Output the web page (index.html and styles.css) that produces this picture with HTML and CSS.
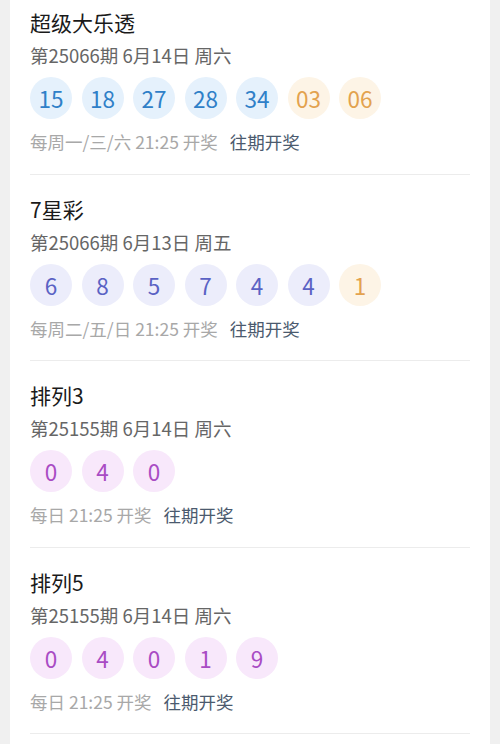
FILE: index.html
```html
<!DOCTYPE html>
<html lang="zh-CN">
<head>
    <meta charset="UTF-8">
    <meta name="viewport" content="width=device-width, initial-scale=1.0">
    <title>开奖结果</title>
    <link rel="stylesheet" href="styles.css">
</head>
<body>
    <div class="card">
        <div class="lottery">
            <div class="lottery-name">超级大乐透</div>
            <div class="lottery-issue">第25066期 6月14日 周六</div>
            <div class="balls">
                <span class="ball blue">15</span>
                <span class="ball blue">18</span>
                <span class="ball blue">27</span>
                <span class="ball blue">28</span>
                <span class="ball blue">34</span>
                <span class="ball orange">03</span>
                <span class="ball orange">06</span>
            </div>
            <div class="lottery-foot">
                <span class="schedule">每周一/三/六 21:25 开奖</span>
                <a class="history" href="#">往期开奖</a>
            </div>
        </div>
        <div class="lottery">
            <div class="lottery-name">7星彩</div>
            <div class="lottery-issue">第25066期 6月13日 周五</div>
            <div class="balls">
                <span class="ball indigo">6</span>
                <span class="ball indigo">8</span>
                <span class="ball indigo">5</span>
                <span class="ball indigo">7</span>
                <span class="ball indigo">4</span>
                <span class="ball indigo">4</span>
                <span class="ball orange">1</span>
            </div>
            <div class="lottery-foot">
                <span class="schedule">每周二/五/日 21:25 开奖</span>
                <a class="history" href="#">往期开奖</a>
            </div>
        </div>
        <div class="lottery">
            <div class="lottery-name">排列3</div>
            <div class="lottery-issue">第25155期 6月14日 周六</div>
            <div class="balls">
                <span class="ball purple">0</span>
                <span class="ball purple">4</span>
                <span class="ball purple">0</span>
            </div>
            <div class="lottery-foot">
                <span class="schedule">每日 21:25 开奖</span>
                <a class="history" href="#">往期开奖</a>
            </div>
        </div>
        <div class="lottery">
            <div class="lottery-name">排列5</div>
            <div class="lottery-issue">第25155期 6月14日 周六</div>
            <div class="balls">
                <span class="ball purple">0</span>
                <span class="ball purple">4</span>
                <span class="ball purple">0</span>
                <span class="ball purple">1</span>
                <span class="ball purple">9</span>
            </div>
            <div class="lottery-foot">
                <span class="schedule">每日 21:25 开奖</span>
                <a class="history" href="#">往期开奖</a>
            </div>
        </div>
    </div>
</body>
</html>
```

FILE: styles.css
```css
body {
    margin: 0;
    background-color: #f0f0f0;
    font-family: "Noto Sans CJK SC", "Noto Sans", sans-serif;
}
.card {
    margin: 0 10px;
    padding: 0 20px;
    background-color: #fff;
    min-height: 744px;
}
.lottery {
    padding: 20px 0 19.5px;
    border-bottom: 1px solid #ececec;
}
.lottery:first-child {
    padding-top: 8px;
}
.lottery-name {
    font-size: 21px;
    line-height: 28px;
    color: #1a1a1a;
}
.lottery-issue {
    margin-top: 7px;
    font-size: 18.5px;
    line-height: 24px;
    color: #666;
}
.balls {
    display: flex;
    gap: 9.5px;
    margin-top: 10px;
}
.ball {
    display: flex;
    align-items: center;
    justify-content: center;
    width: 42px;
    height: 42px;
    border-radius: 50%;
    font-size: 22.5px;
}
.blue {
    background-color: #e5f1fc;
    color: #2f80c8;
}
.orange {
    background-color: #fdf4e6;
    color: #e3a24e;
}
.indigo {
    background-color: #ecedfb;
    color: #5a62c4;
}
.purple {
    background-color: #f8e8fb;
    color: #a94cc4;
}
.lottery-foot {
    display: flex;
    gap: 12px;
    margin-top: 11px;
    font-size: 17.5px;
    line-height: 24px;
}
.schedule {
    color: #a8a8a8;
}
.history {
    color: #4b5a6e;
    text-decoration: none;
}
```
